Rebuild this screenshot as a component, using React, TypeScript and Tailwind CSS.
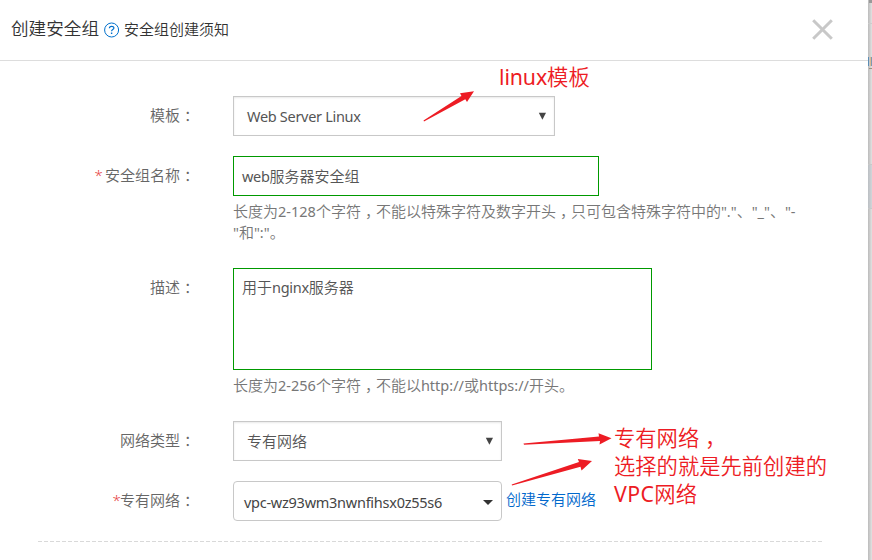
import type { ReactNode } from 'react';

/* Latin runs are set a little smaller and tighter than the Chinese text around them. */
function En({ children, className = 'text-[14.5px] tracking-[-0.3px]' }: { children: ReactNode; className?: string }) {
  return <span className={`font-normal leading-none ${className}`}>{children}</span>;
}

/* Latin runs inside the hint lines. */
function HintEn({ children }: { children: ReactNode }) {
  return <En className="text-[14.5px]">{children}</En>;
}

/* Full-width punctuation centred in its cell, kept on the baseline. */
function Mid({ children }: { children: ReactNode }) {
  return <span className="pl-[0.27em] tracking-[-0.27em]">{children}</span>;
}

function Row({ label, required, className = '', children }: { label: string; required?: ReactNode; className?: string; children: ReactNode }) {
  return (
    <div className={`flex items-start ${className}`}>
      <div className="mr-[38px] h-10 w-[195px] shrink-0 whitespace-pre text-right leading-[39px] text-[#666]">
        {required}
        {label}
        <Mid>：</Mid>
      </div>
      <div className="min-w-0">{children}</div>
    </div>
  );
}

function Select({ children, className }: { children: ReactNode; className: string }) {
  return (
    <div className={`flex h-10 items-center justify-between border border-[#c8c8c8] pl-[13px] pr-2 text-[#555] shadow-[inset_0_1px_2px_rgba(0,0,0,0.09)] ${className}`}>
      <span>{children}</span>
      <svg width="8" height="8" viewBox="0 0 8 8" className="mb-px">
        <path d="M0.8 0.8H8L4.4 7.7Z" fill="#444" />
      </svg>
    </div>
  );
}

export default function App() {
  return (
    <div className="relative flex h-[560px] w-[872px] overflow-hidden bg-white font-['Noto_Sans','Noto_Sans_CJK_SC',sans-serif] text-[15px]">
      <main className="w-[868px] shrink-0">
        <header className="flex h-[61px] items-center border-b border-[#ddd] pb-0.5 pl-[11px] pr-[35px] text-[#333]">
          <h1 className="mb-0.5 text-[17.6px] font-[350] leading-6">创建安全组</h1>
          <svg width="16" height="16" viewBox="0 0 16 16" className="ml-[5px] mt-0.5" fill="none" stroke="#0070cc">
            <circle cx="7.6" cy="8" r="7" strokeWidth="1" />
            <path d="M5.4 6.3C5.4 3.7 9.9 3.7 9.9 6.1C9.9 7.7 7.6 7.5 7.6 9.3" strokeWidth="1.2" />
            <path d="M7.6 10.5V12" strokeWidth="1.4" />
          </svg>
          <span className="ml-1 font-[350]">安全组创建须知</span>
          <svg width="21" height="21" viewBox="0 0 21 21" className="ml-auto mt-px" stroke="#c8c8c8" strokeWidth="3">
            <path d="M1.2 1.2L19.8 19.8M19.8 1.2L1.2 19.8" />
          </svg>
        </header>

        <div className="pt-[35px] font-[350]">
          <Row label="模板">
            <Select className="w-[322px]"><En>Web Server Linux</En></Select>
          </Row>

          <Row label="安全组名称" required={<span className="tracking-[-0.8px] text-[#e64545]">* </span>} className="mt-5">
            <div className="flex h-10 w-[366px] items-center border border-[#090] pl-2 text-[#555]">
              <span><En>web</En>服务器安全组</span>
            </div>
            <p className="mt-[5px] h-[42px] whitespace-nowrap leading-[21px] text-[#777]">
              长度为<HintEn>2-128</HintEn>个字符<Mid>，</Mid>不能以特殊字符及数字开头<Mid>，</Mid>只可包含特殊字符中的<HintEn>"."</HintEn>、<HintEn>"_"</HintEn>、<HintEn>"-</HintEn>
              <br />
              <HintEn>"</HintEn>和<HintEn>":"</HintEn>。
            </p>
          </Row>

          <Row label="描述" className="mt-[25px]">
            <div className="h-[102px] w-[419px] border border-[#090] pl-2 pt-2 leading-[21px] text-[#555]">
              用于<En>nginx</En>服务器
            </div>
            <p className="mt-[5px] h-[21px] whitespace-nowrap leading-[21px] text-[#777]">
              长度为<HintEn>2-256</HintEn>个字符<Mid>，</Mid>不能以<HintEn>http://</HintEn>或<HintEn>https://</HintEn>开头。
            </p>
          </Row>

          <Row label="网络类型" className="mt-[25px]">
            <Select className="w-[269px]">专有网络</Select>
          </Row>

          <Row label="专有网络" required={<span className="tracking-[-0.8px] text-[#e64545]">*</span>} className="mt-5">
            <div className="flex items-center">
              <div className="flex h-10 w-[269px] items-center justify-between rounded-sm border border-[#c8c8c8] pl-2.5 pr-2 pt-[3px] text-[#444]">
                <En className="text-[14.5px] tracking-[-0.26px]">vpc-wz93wm3nwnfihsx0z55s6</En>
                <svg width="10" height="5" viewBox="0 0 10 5"><path d="M0 0H10L5 5Z" fill="#333" /></svg>
              </div>
              <a className="ml-1 pb-[3px] text-[#0068cc]">创建专有网络</a>
            </div>
          </Row>
          <div className="ml-[38px] mt-5 h-px w-[785px] bg-[repeating-linear-gradient(90deg,#d9d9d9_0_4px,transparent_4px_6px)]" />
        </div>
      </main>

      {/* Edge of the dimmed page behind the dialog */}
      <aside className="flex w-1 flex-col bg-linear-to-r from-[#bbb] to-[#e2e2e2]">
        <div className="ml-px h-[3px] bg-[#999]" />
        <div className="mt-5 h-px bg-[#ccc]" />
        <div className="mt-[33px] flex h-[9px]">
          <i className="w-px bg-[#5b8db5]" />
          <i className="ml-px w-px bg-[#d9b98f]" />
          <i className="w-px bg-[#7b9ab3]" />
        </div>
        <div className="ml-px mt-[2px] h-px bg-[#a09080]" />
        <div className="mt-[95px] h-[45px] border-y border-[#c8c8c8] bg-[#bcc5d0]/40" />
      </aside>

      {/* Red annotations laid over the form */}
      <svg className="pointer-events-none absolute left-0 top-0" width="872" height="560" viewBox="0 0 872 560" fill="#ed1c24">
        <path d="M423.5 120.5L461.5 96L460 93.3L474 91.2L467 102L465.3 99.2L424 121.6Z" />
        <path d="M523.5 443.5L599 436.6L598.5 433.3L611.5 438.2L599.5 444.5L600 440.9L524 444.8Z" />
        <path d="M511.7 484.5L579 462L577.8 459L592 461L581.5 470.5L580.5 466.7L512 485.6Z" />
      </svg>
      <p className="absolute left-[499px] top-[63px] h-7 whitespace-nowrap text-[21.3px] leading-7 text-[#ed1c24]">
        <En className="tracking-[-0.1px]">linux</En><span className="font-[350]">模板</span>
      </p>
      <p className="absolute left-[614px] top-[424px] whitespace-nowrap text-[21.3px] font-[350] leading-7 text-[#ed1c24]">
        专有网络<Mid>，</Mid>
        <br />
        选择的就是先前创建的
        <br />
        <En className="tracking-[0.4px]">VPC</En>网络
      </p>
    </div>
  );
}
